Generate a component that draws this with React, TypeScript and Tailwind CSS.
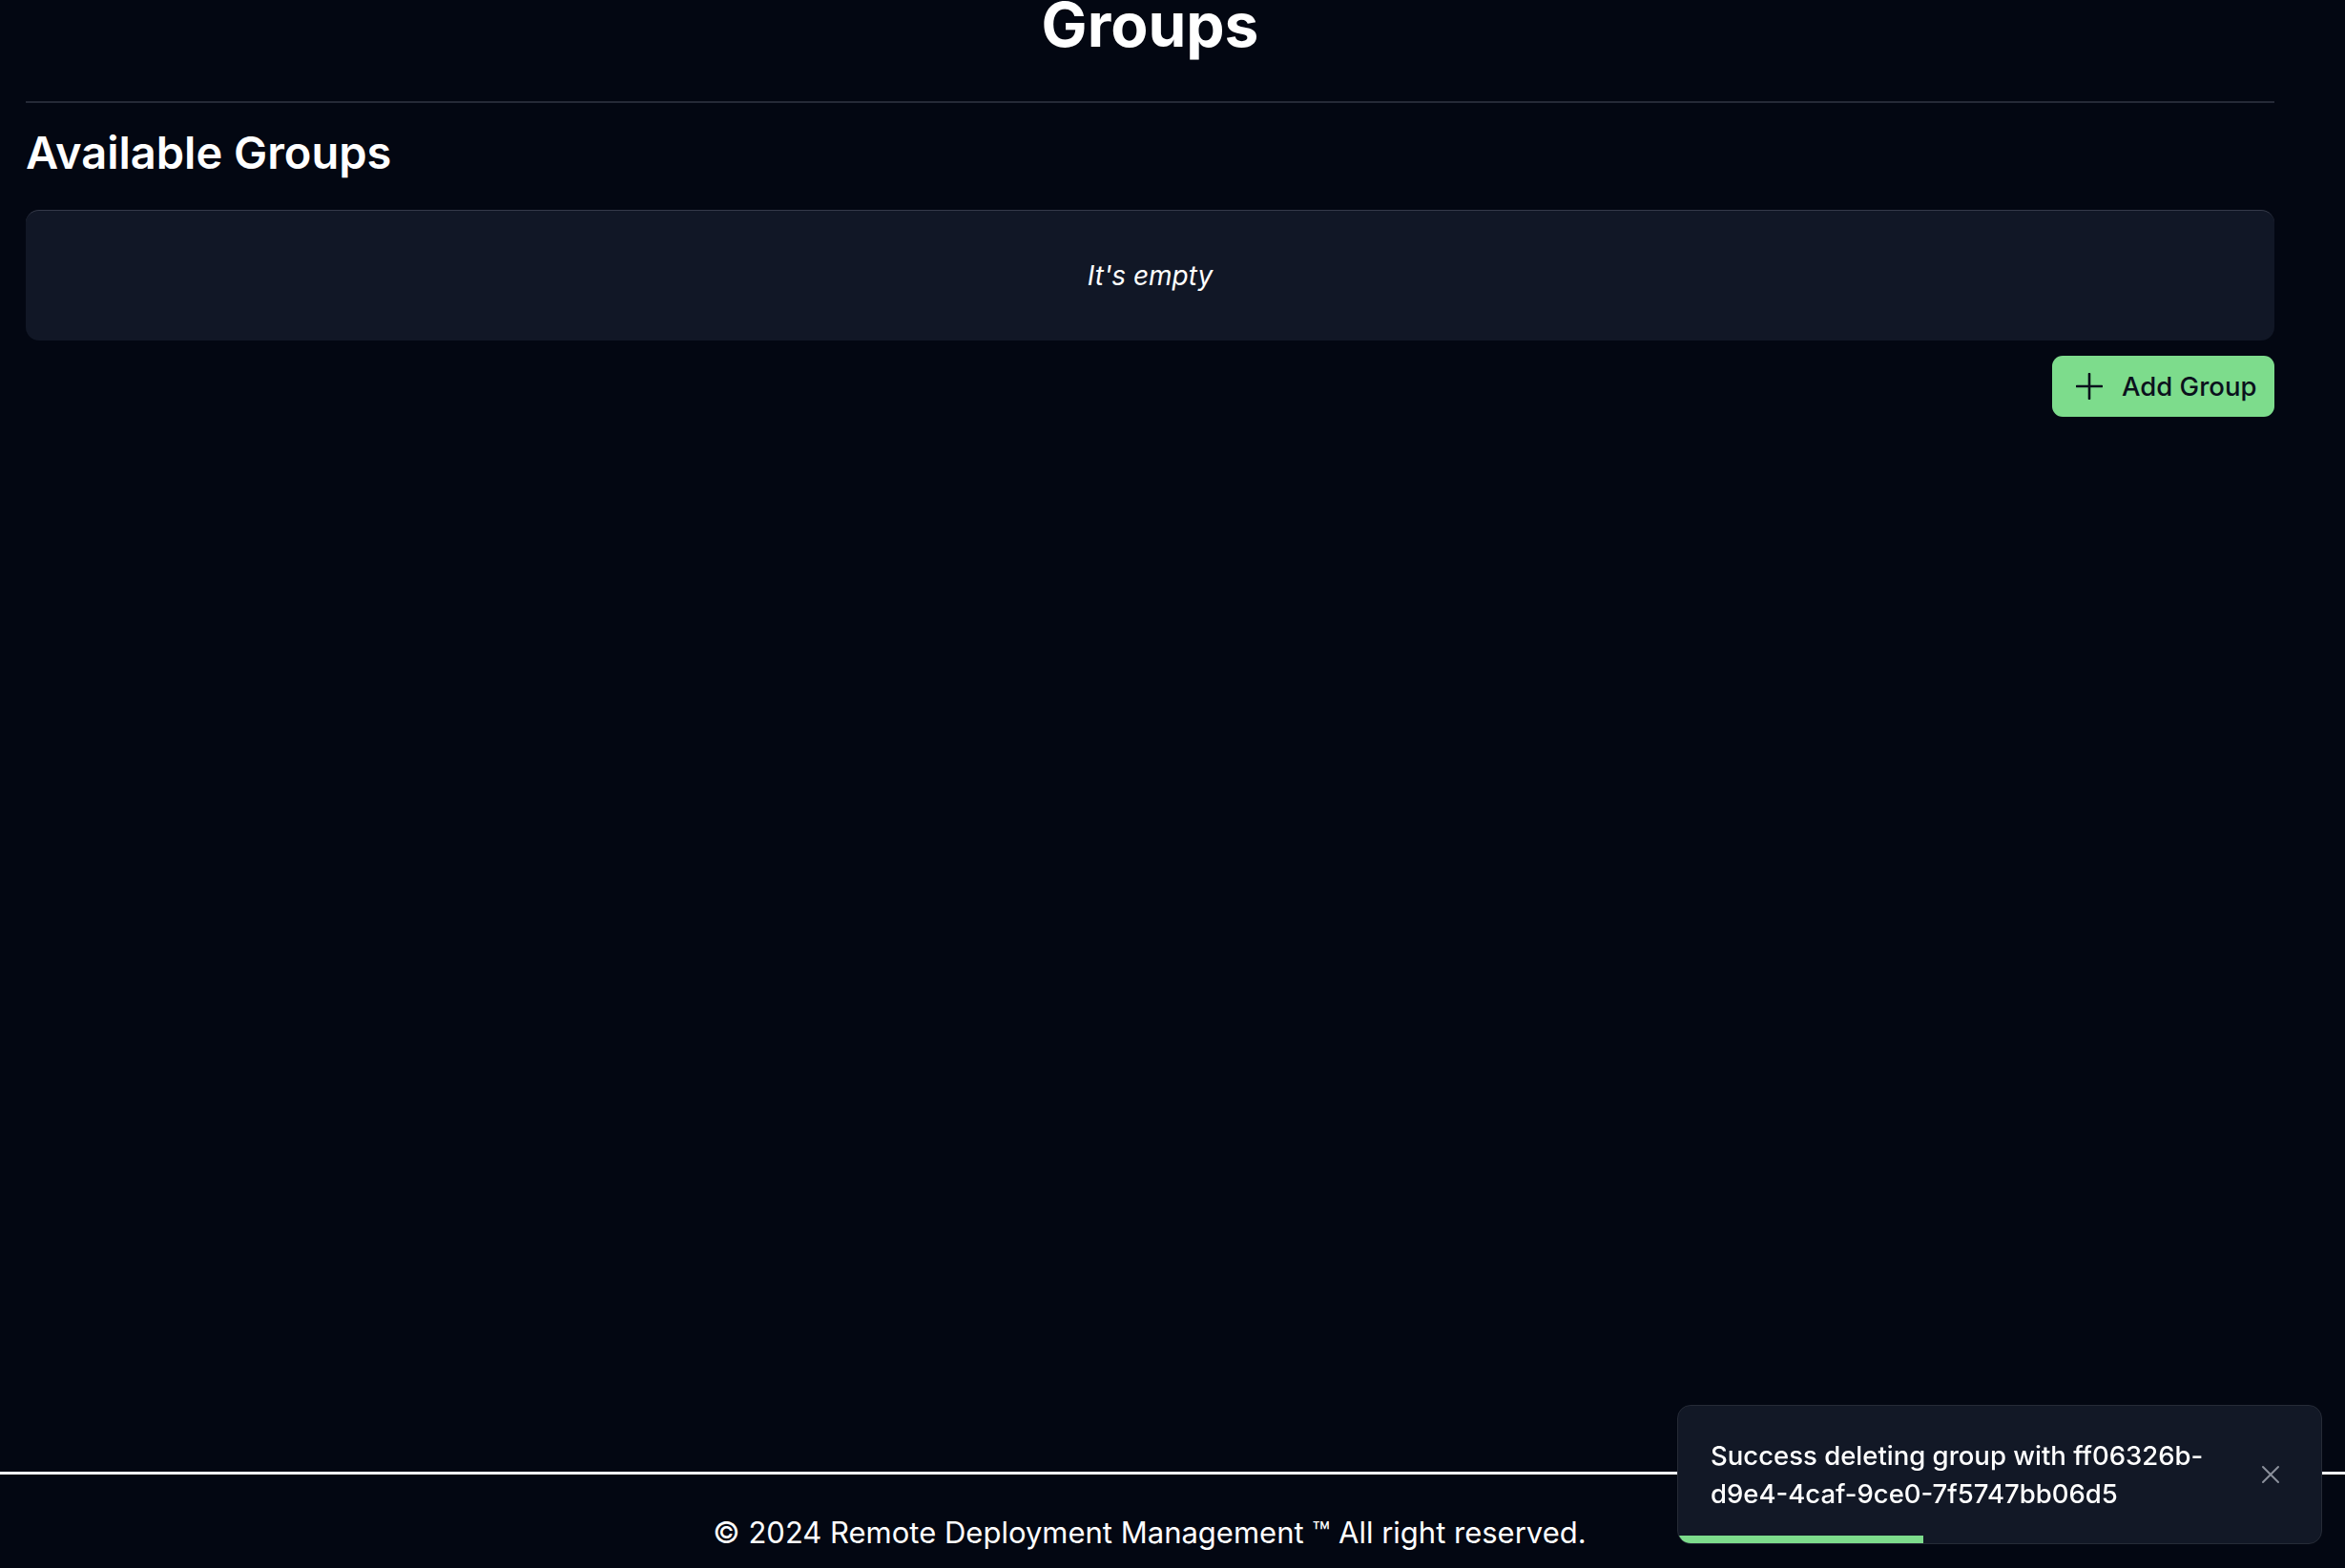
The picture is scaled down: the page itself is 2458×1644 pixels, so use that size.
import { useState } from "react";

function PlusIcon() {
  return (
    <svg width="28" height="28" viewBox="0 0 28 28" fill="none">
      <path
        d="M14 1v26M1 14h26"
        stroke="currentColor"
        strokeWidth="2.6"
        strokeLinecap="round"
      />
    </svg>
  );
}

function CloseIcon() {
  return (
    <svg width="20" height="20" viewBox="0 0 20 20" fill="none">
      <path
        d="M2 2l16 16M18 2L2 18"
        stroke="currentColor"
        strokeWidth="2"
        strokeLinecap="round"
      />
    </svg>
  );
}

function Toast({ message, onClose }: { message: string; onClose: () => void }) {
  return (
    <div className="fixed right-[24px] bottom-[25px] w-[676px] h-[146px] rounded-[14px] border border-[#262b37] bg-[#121826] overflow-hidden">
      <div className="flex items-center justify-between h-full pl-[34px] pr-[43px]">
        <p className="w-[560px] text-[27.5px] leading-[40px] font-medium text-white">
          {message}
        </p>
        <button onClick={onClose} className="text-[#8b909b]">
          <CloseIcon />
        </button>
      </div>
      <div className="absolute left-0 bottom-0 h-[8px] w-[257px] bg-[#7ddc8c] rounded-bl-[14px]" />
    </div>
  );
}

export default function App() {
  const [groups] = useState<string[]>([]);
  const [toast, setToast] = useState<string | null>(
    "Success deleting group with ff06326b-d9e4-4caf-9ce0-7f5747bb06d5",
  );

  return (
    <div className="min-h-[1644px] flex flex-col bg-[#030712] text-white font-['Inter','Liberation_Sans',sans-serif]">
      <main className="flex-1 ml-[27px] w-[2357px]">
        <h1 className="text-center text-[64px] leading-[51px] font-bold">Groups</h1>
        <div className="mt-[55px] h-[2px] bg-[#252a37]" />
        <h2 className="mt-[24px] text-[47px] leading-[56px] font-semibold">
          Available Groups
        </h2>
        <div className="mt-[32px] h-[137px] rounded-[14px] bg-[#111726] border-t border-[#353a49] flex items-center justify-center">
          {groups.length === 0 ? (
            <span className="text-[28px] leading-[40px] italic">It's empty</span>
          ) : (
            groups.map((g) => <div key={g}>{g}</div>)
          )}
        </div>
        <div className="mt-[16px] flex justify-end">
          <button className="h-[64px] w-[233px] rounded-[11px] bg-[#7ddc8c] text-[#0b111c] flex items-center pl-[25px] gap-[20px]">
            <PlusIcon />
            <span className="text-[27.5px] leading-[40px] font-medium">Add Group</span>
          </button>
        </div>
      </main>
      <footer className="border-t-[3px] border-white h-[101px]">
        <div className="w-[2410px] pt-[38px] text-center text-[31px] leading-[46px]">
          © 2024 Remote Deployment Management ™ All right reserved.
        </div>
      </footer>
      {toast && <Toast message={toast} onClose={() => setToast(null)} />}
    </div>
  );
}
